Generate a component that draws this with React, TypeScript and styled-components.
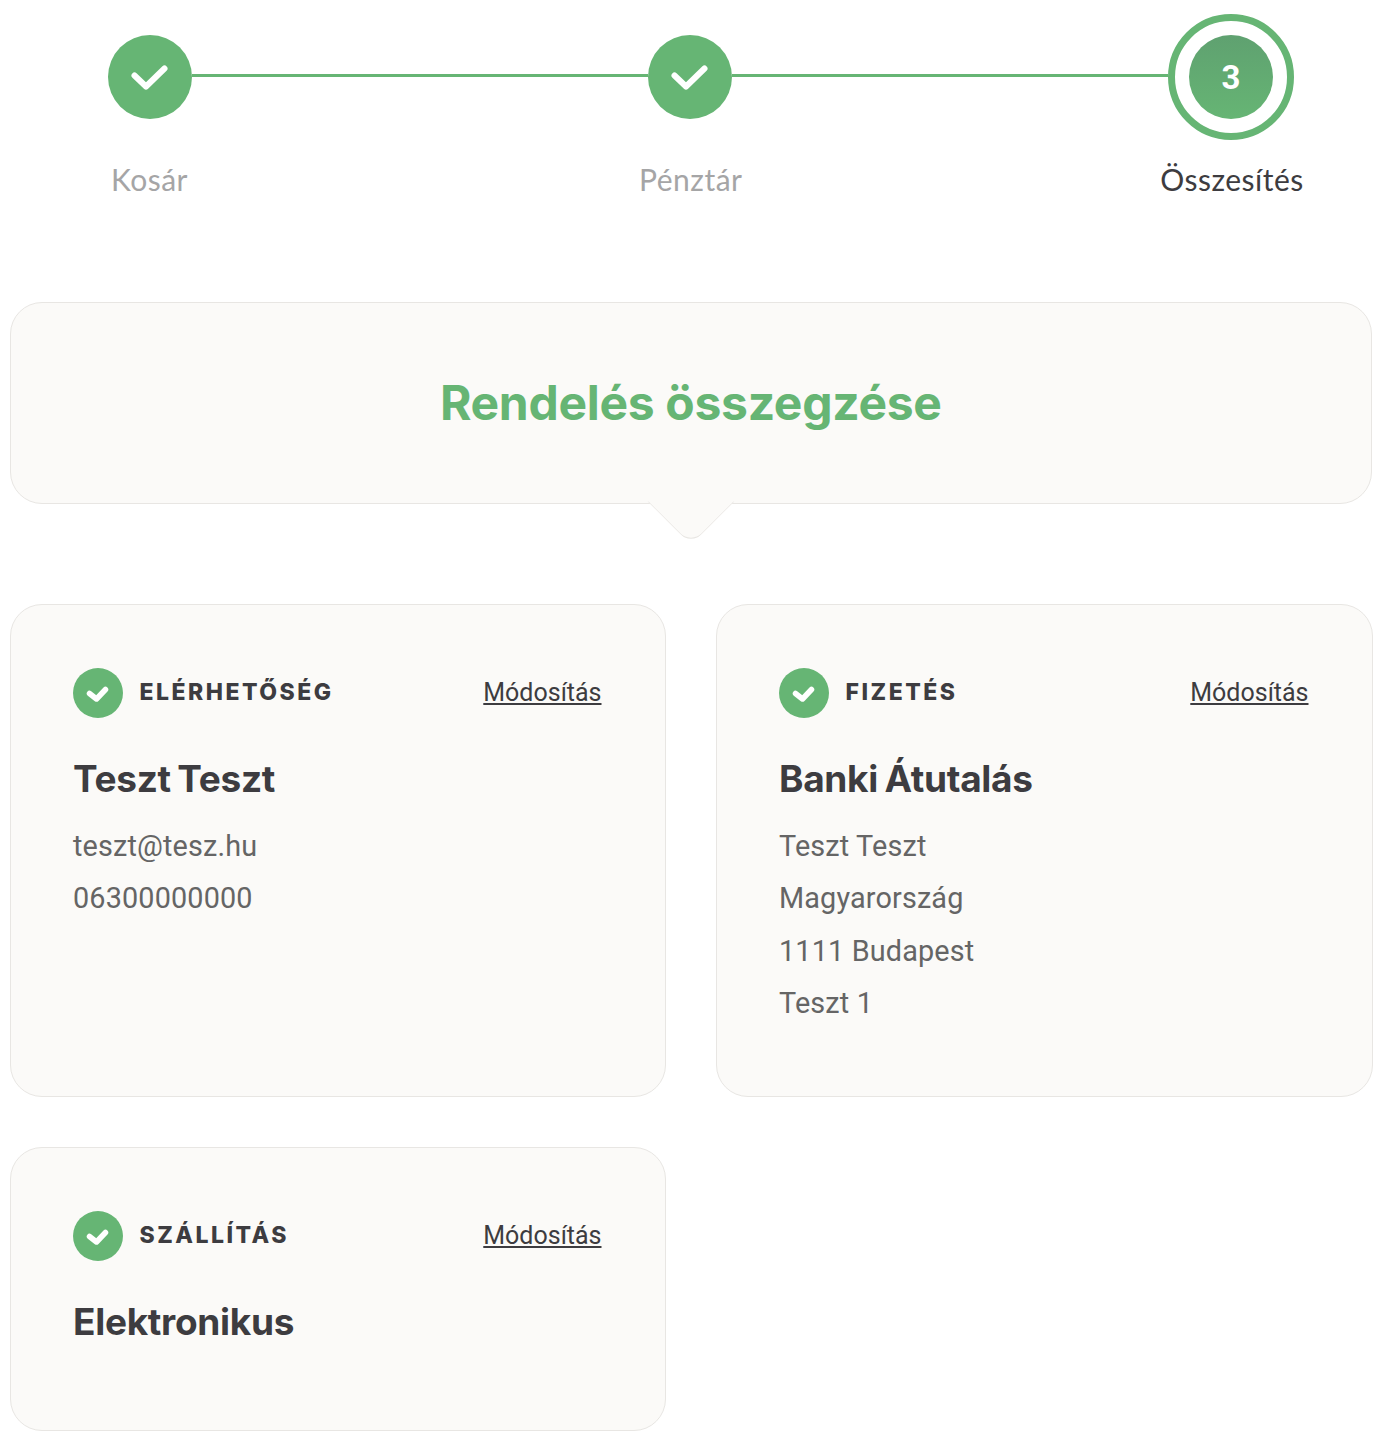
import React, { FC } from "react";
import styled, { createGlobalStyle } from "styled-components";

const green = "#66b574";
const ink = "#3d3c40";
const panel = "#fbfaf8";
const edge = "#e8e6e3";

const GlobalStyle = createGlobalStyle`
  html, body {
    margin: 0;
    padding: 0;
    background: #fff;
    font-family: "Roboto", sans-serif;
  }
`;

const Page = styled.div`
  width: 1383px;
  height: 1445px;
  overflow: hidden;
  box-sizing: border-box;
  padding: 14px 11px 0 9.5px;
`;

const Track = styled.div`
  display: grid;
  grid-template-columns: 84px 456px 84px 436px 126px;
  align-items: center;
  height: 126px;
  padding-left: 98.5px;
`;

const Dot = styled.div`
  width: 84px;
  height: 84px;
  border-radius: 50%;
  background: ${green};
  display: flex;
  align-items: center;
  justify-content: center;
`;

const Line = styled.div`
  height: 3px;
  margin-bottom: 3px;
  background: ${green};
`;

const Ring = styled.div`
  box-sizing: border-box;
  width: 126px;
  height: 126px;
  border-radius: 50%;
  border: 7px solid ${green};
  display: flex;
  align-items: center;
  justify-content: center;
`;

const CurrentDot = styled.div`
  width: 84px;
  height: 84px;
  border-radius: 50%;
  background: linear-gradient(#5fa170, ${green});
  color: #fff;
  font-size: 33px;
  font-weight: 700;
  display: flex;
  align-items: center;
  justify-content: center;
`;

const Labels = styled.div`
  display: flex;
  justify-content: space-between;
  margin-top: 21px;
`;

const Label = styled.div<{ $active?: boolean }>`
  width: 280px;
  text-align: center;
  font-family: "Lato", sans-serif;
  font-size: 30px;
  line-height: 36px;
  letter-spacing: 0.5px;
  color: ${(p) => (p.$active ? ink : "#a5a5a6")};
`;

const Banner = styled.div`
  position: relative;
  box-sizing: border-box;
  height: 202px;
  margin-top: 105px;
  background: ${panel};
  border: 1px solid ${edge};
  border-radius: 32px;
  display: flex;
  align-items: center;
  justify-content: center;
`;

const Pointer = styled.div`
  position: absolute;
  left: 50%;
  bottom: -21px;
  width: 62px;
  height: 62px;
  margin-left: -31px;
  box-sizing: border-box;
  background: ${panel};
  border-right: 1px solid ${edge};
  border-bottom: 1px solid ${edge};
  border-bottom-right-radius: 16px;
  transform: rotate(45deg) translate(6px, 6px);
  clip-path: polygon(100% 0, 100% 100%, 0 100%);
`;

const Heading = styled.h1`
  margin: 0 0 2px;
  font-family: "Inter", sans-serif;
  font-size: 48px;
  font-weight: 700;
  letter-spacing: -0.3px;
  color: ${green};
`;

const Cards = styled.div`
  display: grid;
  grid-template-columns: 656px 657px;
  column-gap: 50px;
  row-gap: 50px;
  margin-top: 100px;
`;

const Card = styled.section<{ $height: number }>`
  box-sizing: border-box;
  height: ${(p) => p.$height}px;
  padding: 63px 63px 0 62.5px;
  background: ${panel};
  border: 1px solid ${edge};
  border-radius: 32px;
`;

const CardHead = styled.div`
  display: flex;
  align-items: center;
  height: 50px;
`;

const Badge = styled.div`
  width: 50px;
  height: 50px;
  flex: none;
  border-radius: 50%;
  background: ${green};
  display: flex;
  align-items: center;
  justify-content: center;
`;

const CardLabel = styled.div`
  flex: 1;
  margin-left: 16.5px;
  margin-bottom: 2px;
  font-family: "Inter", sans-serif;
  font-size: 23px;
  font-weight: 800;
  letter-spacing: 2.5px;
  color: ${ink};
`;

const EditLink = styled.a`
  margin-bottom: 1px;
  font-size: 25px;
  color: ${ink};
  text-decoration: underline;
`;

const CardTitle = styled.h2`
  margin: 38px 0 0;
  font-family: "Inter", sans-serif;
  font-size: 37px;
  line-height: 46px;
  font-weight: 700;
  letter-spacing: -0.3px;
  word-spacing: -2px;
  color: ${ink};
`;

const Details = styled.div`
  margin-top: 18px;
`;

const DetailLine = styled.div`
  font-size: 28.8px;
  line-height: 52.3px;
  letter-spacing: 0.15px;
  color: #656565;
`;

const StepCheck = () => (
  <svg width="40" height="30" viewBox="0 0 40 30" fill="none">
    <path d="M4.5 13.5 L16 24.5 L34.5 6.5" stroke="#fff" strokeWidth="6" strokeLinecap="round" strokeLinejoin="round" />
  </svg>
);

const BadgeCheck = () => (
  <svg width="26" height="20" viewBox="0 0 26 20" fill="none">
    <path d="M4.5 10.5 L11.5 16 L20.5 6.5" stroke="#fff" strokeWidth="5.5" strokeLinecap="round" strokeLinejoin="round" />
  </svg>
);

interface SummaryProps {
  label: string;
  title: string;
  lines?: string[];
  height: number;
}

const SummaryCard: FC<SummaryProps> = ({ label, title, lines, height }) => (
  <Card $height={height}>
    <CardHead>
      <Badge>
        <BadgeCheck />
      </Badge>
      <CardLabel>{label}</CardLabel>
      <EditLink href="#">Módosítás</EditLink>
    </CardHead>
    <CardTitle>{title}</CardTitle>
    {lines && (
      <Details>
        {lines.map((line) => (
          <DetailLine key={line}>{line}</DetailLine>
        ))}
      </Details>
    )}
  </Card>
);

const App: FC = () => (
  <Page>
    <GlobalStyle />
    <Track>
      <Dot>
        <StepCheck />
      </Dot>
      <Line />
      <Dot>
        <StepCheck />
      </Dot>
      <Line />
      <Ring>
        <CurrentDot>3</CurrentDot>
      </Ring>
    </Track>
    <Labels>
      <Label>Kosár</Label>
      <Label>Pénztár</Label>
      <Label $active>Összesítés</Label>
    </Labels>
    <Banner>
      <Heading>Rendelés összegzése</Heading>
      <Pointer />
    </Banner>
    <Cards>
      <SummaryCard label="ELÉRHETŐSÉG" title="Teszt Teszt" lines={["teszt@tesz.hu", "06300000000"]} height={493} />
      <SummaryCard
        label="FIZETÉS"
        title="Banki Átutalás"
        lines={["Teszt Teszt", "Magyarország", "1111 Budapest", "Teszt 1"]}
        height={493}
      />
      <SummaryCard label="SZÁLLÍTÁS" title="Elektronikus" height={284} />
    </Cards>
  </Page>
);

export default App;
